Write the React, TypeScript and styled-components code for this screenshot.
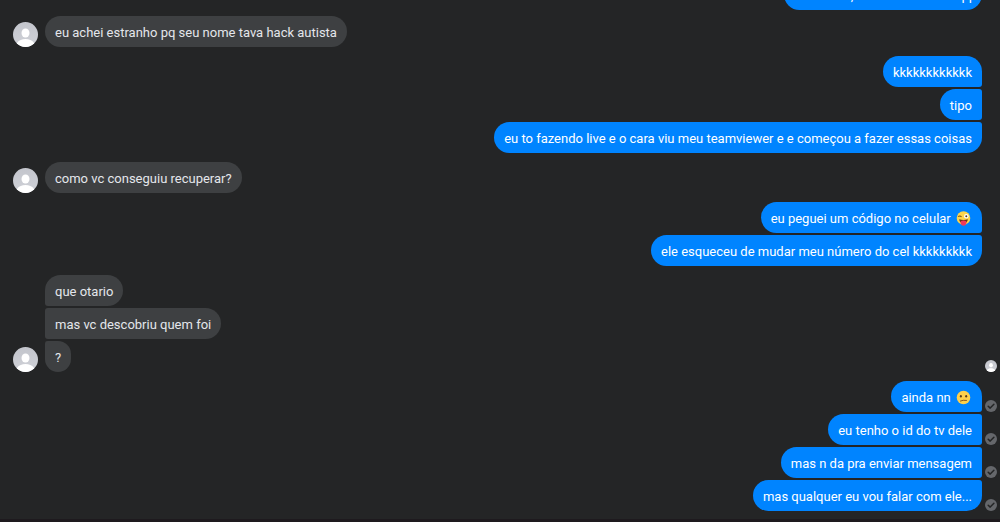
import React from 'react';
import styled, { createGlobalStyle, css } from 'styled-components';

type Side = 'in' | 'out';

const GlobalStyle = createGlobalStyle`
  * { box-sizing: border-box; }
  body { margin: 0; background: #242526; }
`;

const Page = styled.main`
  display: flex;
  flex-direction: column;
  justify-content: flex-end;
  gap: 6px;
  height: 100vh;
  padding: 0 3px 8px 13px;
  overflow: hidden;
  background: #242526;
  border-bottom: 3px solid #1e1a1e;
  color: #e4e6eb;
  font: 13px/19px Roboto, 'Open Sans', sans-serif;
`;

const Thread = styled.section`
  display: flex;
  flex: none;
  flex-direction: column;
  gap: 9px;
`;

const Group = styled.div`
  display: flex;
  flex-direction: column;
  gap: 2px;
`;

const Row = styled.div<{ $side: Side }>`
  display: flex;
  align-items: flex-end;
  justify-content: ${(p) => (p.$side === 'out' ? 'flex-end' : 'flex-start')};
`;

const AvatarSlot = styled.div`
  display: flex;
  flex: none;
  width: 32px;
`;

const Spacer = styled.div`
  flex: 1;
`;

const StatusSlot = styled.div`
  display: flex;
  flex: none;
  justify-content: flex-end;
  width: 15px;
`;

const outgoing = css<{ $first: boolean; $last: boolean }>`
  background: #0084ff;
  color: #fff;
  border-radius: 16px ${(p) => (p.$first ? 16 : 3)}px ${(p) => (p.$last ? 16 : 3)}px 16px;
`;

const incoming = css<{ $first: boolean; $last: boolean }>`
  background: #3e4042;
  border-radius: ${(p) => (p.$first ? 16 : 3)}px 16px 16px ${(p) => (p.$last ? 16 : 3)}px;
`;

const Bubble = styled.p<{ $side: Side; $first: boolean; $last: boolean }>`
  margin: 0;
  padding: 7px 10px 5px;
  white-space: nowrap;
  ${(p) => (p.$side === 'out' ? outgoing : incoming)}
`;

const Emoji = styled.svg`
  width: 15px;
  height: 15px;
  margin: 0 1px 0 2px;
  vertical-align: -3px;
`;

function Avatar({ size }: { size: number }) {
  return (
    <svg width={size} height={size} viewBox="0 0 50 50" role="img" aria-label="Contato">
      <defs>
        <clipPath id={`disc${size}`}><circle cx="25" cy="25" r="25" /></clipPath>
        <linearGradient id={`shade${size}`} x1="0" y1="0" x2="0" y2="1">
          <stop offset="0" stopColor="#c3c5cc" />
          <stop offset="1" stopColor="#d0d2d8" />
        </linearGradient>
      </defs>
      <g clipPath={`url(#disc${size})`}>
        <rect width="50" height="50" fill={`url(#shade${size})`} />
        <ellipse cx="25" cy="22" rx="8" ry="9" fill="#fff" />
        <path d="M8 50V42C12 36 18 34 25 34S38 36 42 42V50Z" fill="#fff" />
      </g>
    </svg>
  );
}

function Delivered() {
  return (
    <svg width="12" height="12" viewBox="0 0 12 12" role="img" aria-label="Entregue">
      <circle cx="6" cy="6" r="6" fill="#65676b" />
      <path d="M3.2 6.2L5.2 8.1L8.9 4.2" fill="none" stroke="#242526" strokeWidth="1.5" strokeLinecap="round" strokeLinejoin="round" />
    </svg>
  );
}

function Winking() {
  return (
    <Emoji viewBox="0 0 15 15" role="img" aria-label="piscando com a língua de fora">
      <circle cx="7.5" cy="7" r="6.8" fill="#ffd54a" />
      <path d="M2.2 5.7Q4 4.2 5.5 5.8" fill="none" stroke="#7a4b12" strokeWidth="1.1" />
      <circle cx="10.3" cy="5.2" r="2.3" fill="#fff" />
      <circle cx="10.3" cy="5.2" r="1" fill="#5b3a1c" />
      <path d="M3.2 8.3Q7.5 9.8 11.8 8.3Q11.5 12.2 7.5 12.2T3.2 8.3Z" fill="#6b3414" />
      <path d="M4.7 10.2Q7.5 9 10.3 10.2V12.4Q9.8 14.8 7.5 14.8T4.7 12.4Z" fill="#f0385c" />
    </Emoji>
  );
}

function Confused() {
  return (
    <Emoji viewBox="0 0 15 15" role="img" aria-label="confuso">
      <circle cx="7.5" cy="7.5" r="6.8" fill="#ffd04a" />
      <ellipse cx="4.9" cy="6.3" rx="1" ry="1.2" fill="#5b3a1c" />
      <ellipse cx="10.2" cy="6.3" rx="1" ry="1.2" fill="#5b3a1c" />
      <path d="M4.4 11Q7 9.8 10.5 10.4" fill="none" stroke="#7d4c1a" strokeWidth="0.9" strokeLinecap="round" />
    </Emoji>
  );
}

interface Message {
  text: string;
  emoji?: React.ReactNode;
  delivered?: boolean;
  seen?: boolean;
}

interface MessageGroup {
  side: Side;
  messages: Message[];
}

const earlier: MessageGroup[] = [{ side: 'out', messages: [{ text: 'ele entrou, e mudou o nome qq' }] }];

const recent: MessageGroup[] = [
  { side: 'in', messages: [{ text: 'eu achei estranho pq seu nome tava hack autista' }] },
  {
    side: 'out',
    messages: [
      { text: 'kkkkkkkkkkkk' },
      { text: 'tipo' },
      { text: 'eu to fazendo live e o cara viu meu teamviewer e e começou a fazer essas coisas' },
    ],
  },
  { side: 'in', messages: [{ text: 'como vc conseguiu recuperar?' }] },
  {
    side: 'out',
    messages: [
      { text: 'eu peguei um código no celular ', emoji: <Winking /> },
      { text: 'ele esqueceu de mudar meu número do cel kkkkkkkkk' },
    ],
  },
  {
    side: 'in',
    messages: [{ text: 'que otario' }, { text: 'mas vc descobriu quem foi' }, { text: '?', seen: true }],
  },
  {
    side: 'out',
    messages: [
      { text: 'ainda nn ', emoji: <Confused />, delivered: true },
      { text: 'eu tenho o id do tv dele', delivered: true },
      { text: 'mas n da pra enviar mensagem', delivered: true },
      { text: 'mas qualquer eu vou falar com ele...', delivered: true },
    ],
  },
];

function Conversation({ groups }: { groups: MessageGroup[] }) {
  return (
    <Thread>
      {groups.map(({ side, messages }, g) => (
        <Group key={g}>
          {messages.map((m, i) => {
            const last = i === messages.length - 1;
            return (
              <Row key={i} $side={side}>
                {side === 'in' && <AvatarSlot>{last && <Avatar size={25} />}</AvatarSlot>}
                <Bubble $side={side} $first={i === 0} $last={last}>
                  {m.text}
                  {m.emoji}
                </Bubble>
                {m.seen && <Spacer />}
                <StatusSlot>
                  {m.delivered && <Delivered />}
                  {m.seen && <Avatar size={12} />}
                </StatusSlot>
              </Row>
            );
          })}
        </Group>
      ))}
    </Thread>
  );
}

export default function App() {
  return (
    <>
      <GlobalStyle />
      <Page>
        <Conversation groups={earlier} />
        <Conversation groups={recent} />
      </Page>
    </>
  );
}
